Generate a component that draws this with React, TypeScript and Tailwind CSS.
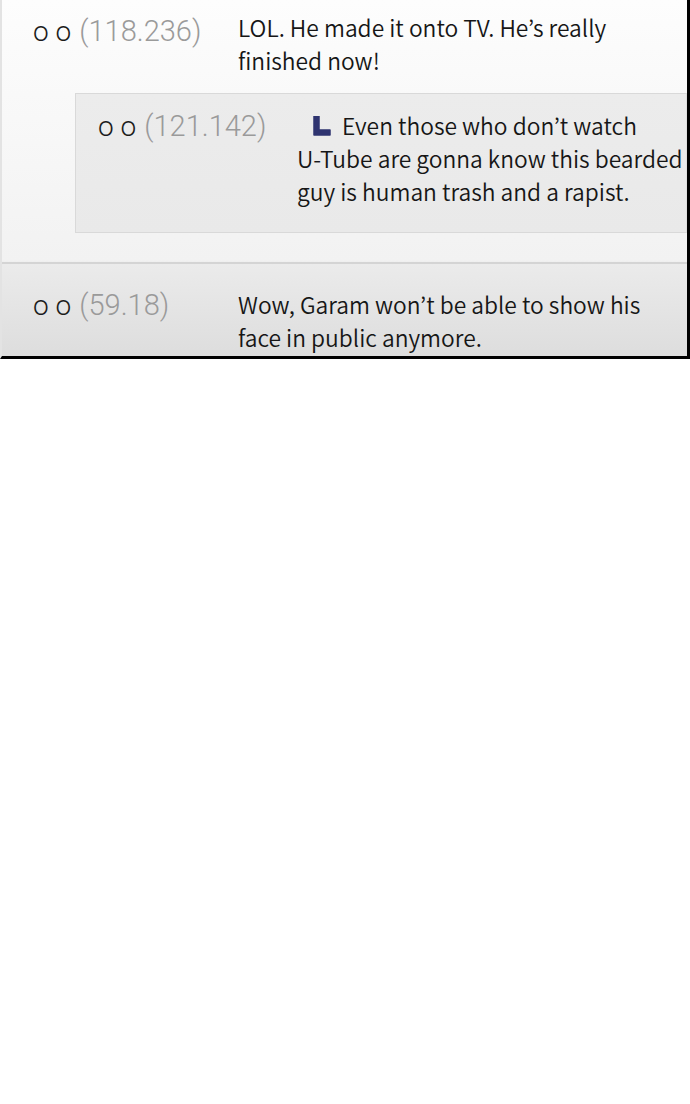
import React from "react";

const txt = "font-['Noto_Sans_CJK_KR','Noto_Sans',sans-serif] text-[22.8px] leading-[33px] text-[#161616] font-[350]";
const num = "font-['Roboto',sans-serif] font-light text-[29px] leading-[33px] text-[#9a9a9a] ml-[8px]";

function Handle({ n }: { n: string }) {
  return (
    <div className="flex items-baseline whitespace-nowrap">
      <span className="font-['Roboto',sans-serif] font-light text-[28px] leading-[33px] text-[#1c1c1c]">o o</span>
      <span className={num}>({n})</span>
    </div>
  );
}

function LMark() {
  return (
    <svg width="19" height="20" viewBox="0 0 19 20" className="inline-block mr-[11px] align-[-1px]">
      <path d="M2 0 H7 V14 H18 V19 H2 Z" fill="#2f3470" stroke="#2f3470" strokeWidth="1.5" strokeLinejoin="round" />
    </svg>
  );
}

export default function App() {
  return (
    <div className="w-[690px] min-h-[1104px] bg-white">
      <div className="w-[690px] h-[359px] border-r-[3px] border-b-[3px] border-black border-l-2 border-l-[#e3e3e3] flex flex-col bg-[linear-gradient(to_bottom,#fdfdfd_0px,#f2f2f2_260px,#ebebeb_264px,#dddddd_356px)]">
        <div className="flex pt-[11px] pl-[31px]">
          <div className="w-[205px] shrink-0 pt-[4px]">
            <Handle n="118.236" />
          </div>
          <div className={txt}>
            LOL. He made it onto TV. He’s really
            <br />
            finished now!
          </div>
        </div>
        <div className="ml-[73px] mt-[16px] h-[140px] border border-[#d9d9d9] border-r-[#e0e0e0] bg-[linear-gradient(to_bottom,#ececec,#e9e9e9)] flex pt-[15px] pl-[22px]">
          <div className="w-[199px] shrink-0 pt-[1px]">
            <Handle n="121.142" />
          </div>
          <div className={txt}>
            <span className="pl-[15px]" />
            <LMark />
            Even those who don’t watch
            <br />
            U-Tube are gonna know this bearded
            <br />
            guy is human trash and a rapist.
          </div>
        </div>
        <div className="mt-[29px] h-[2px] bg-[#d4d4d4]" />
        <div className="flex pt-[24px] pl-[31px]">
          <div className="w-[205px] shrink-0 pt-[1px]">
            <Handle n="59.18" />
          </div>
          <div className={txt}>
            Wow, Garam won’t be able to show his
            <br />
            face in public anymore.
          </div>
        </div>
      </div>
    </div>
  );
}
